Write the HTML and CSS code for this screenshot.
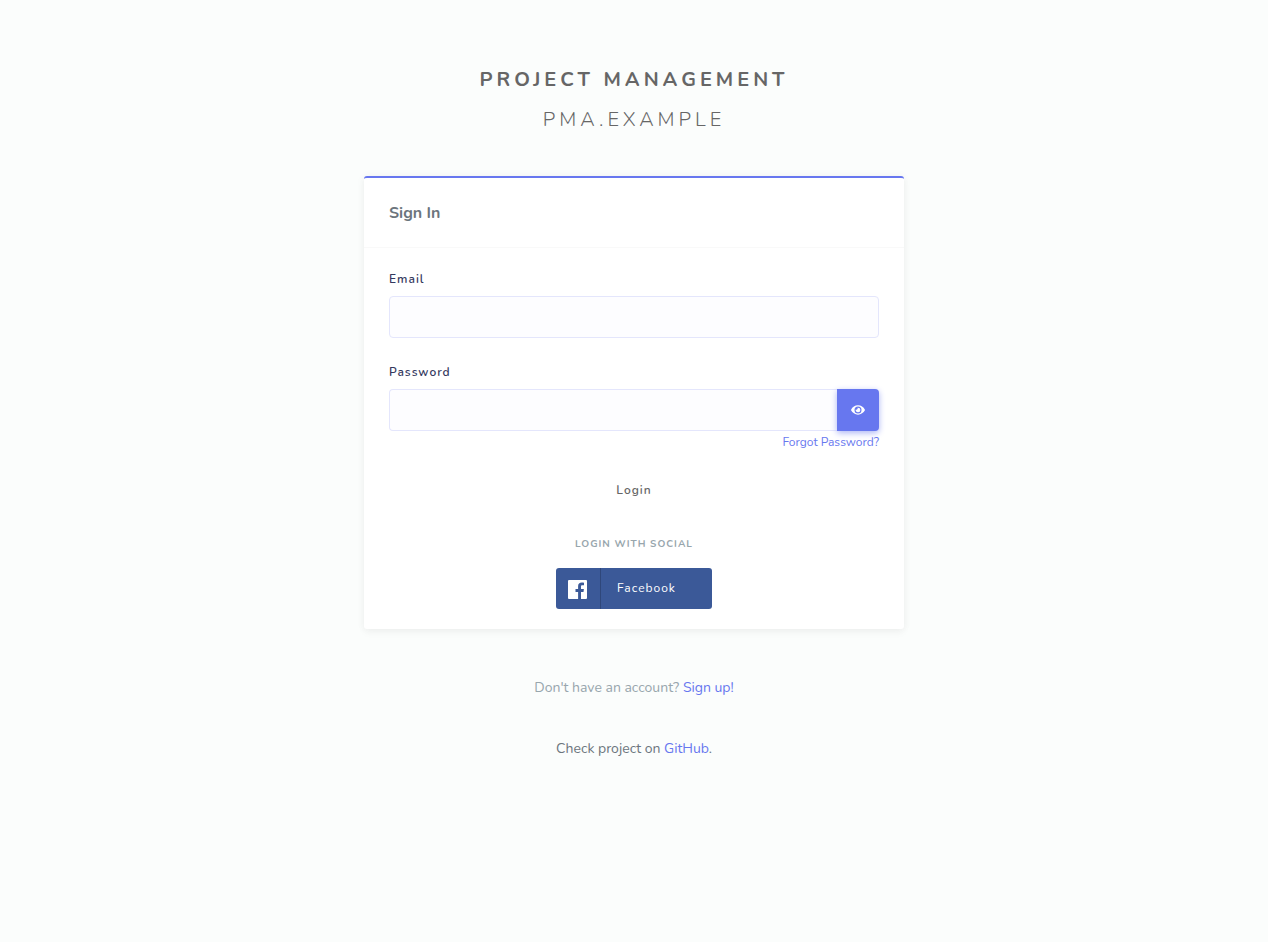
FILE: index.html
```html
<!DOCTYPE html>
<html lang="en">
<head>
<meta charset="utf-8">
<meta name="viewport" content="width=device-width, initial-scale=1">
<title>Sign In</title>
<link rel="stylesheet" href="styles.css">
</head>
<body>
<main class="page">
  <header class="brand">
    <h1 class="brand-name">PROJECT MANAGEMENT</h1>
    <p class="brand-host">PMA.EXAMPLE</p>
  </header>
  <section class="card">
    <div class="card-header"><h2 class="card-title">Sign In</h2></div>
    <form class="card-body">
      <div class="field">
        <label class="label" for="email">Email</label>
        <input class="input" id="email" type="email" name="email">
      </div>
      <div class="field">
        <label class="label" for="password">Password</label>
        <div class="input-group">
          <input class="input" id="password" type="password" name="password">
          <button class="reveal" type="button" aria-label="Show password">
            <svg class="eye" viewBox="0 0 576 512" aria-hidden="true"><path fill="currentColor" d="M572.52 241.4C518.29 135.59 410.93 64 288 64S57.68 135.64 3.48 241.41a32.35 32.35 0 0 0 0 29.19C57.71 376.41 165.07 448 288 448s230.32-71.64 284.52-177.41a32.35 32.35 0 0 0 0-29.19zM288 400a144 144 0 1 1 144-144 143.93 143.93 0 0 1-144 144zm0-240a95.31 95.31 0 0 0-25.31 3.79 47.85 47.85 0 0 1-66.9 66.9A95.78 95.78 0 1 0 288 160z"/></svg>
          </button>
        </div>
        <a class="forgot" href="#">Forgot Password?</a>
      </div>
      <button class="login" type="submit">Login</button>
      <p class="social-title">LOGIN WITH SOCIAL</p>
      <button class="facebook" type="button">
        <span class="facebook-icon"><svg class="facebook-logo" viewBox="0 0 19 19" aria-hidden="true"><path fill="currentColor" d="M1 0h17a1 1 0 0 1 1 1v17a1 1 0 0 1-1 1h-5v-7h2.500l.4-3H13V6.500c0-.8.300-1.300 1.400-1.300H16V2.700c-.6-.1-1.300-.1-2.200-.1-2.300 0-3.700 1.300-3.700 3.700V9H7.500v3h2.600v7H1a1 1 0 0 1-1-1V1a1 1 0 0 1 1-1z"/></svg></span>
        <span class="facebook-text">Facebook</span>
      </button>
    </form>
  </section>
  <p class="note note-muted">Don't have an account? <a href="#">Sign up!</a></p>
  <p class="note">Check project on <a href="#">GitHub</a>.</p>
</main>
</body>
</html>
```
FILE: styles.css
```css
* { box-sizing: border-box; }
body {
  margin: 0;
  background: #fbfdfc;
  color: #6c757d;
  font: 14px/24px Nunito, Lato, sans-serif;
}
h1, h2, p { margin: 0; }
a { color: #6777ef; text-decoration: none; }
button, input { font: inherit; }
button { cursor: pointer; }
.page {
  display: flex;
  flex-direction: column;
  align-items: center;
  padding: 60px 16px 40px;
}
.brand {
  margin-bottom: 36px;
  color: #666;
  font-size: 20px;
  line-height: 40px;
  letter-spacing: 4px;
  text-align: center;
}
.brand-name { font-size: inherit; font-weight: 700; }
.brand-host { font-weight: 300; }
.card {
  width: 100%;
  max-width: 540px;
  background: #fff;
  border-top: 2px solid #6777ef;
  border-radius: 3px;
  box-shadow: 0 4px 8px rgba(0, 0, 0, .03), 0 0 8px rgba(0, 0, 0, .05);
}
.card-header {
  padding: 21px 25px 20px;
  border-bottom: 1px solid #f9f9f9;
}
.card-title { font-size: 16px; line-height: 28px; font-weight: 700; }
.card-body {
  display: flex;
  flex-direction: column;
  align-items: center;
  padding: 20px 25px;
}
.field {
  display: flex;
  flex-direction: column;
  width: 100%;
  margin-bottom: 23px;
}
.label {
  margin-bottom: 6px;
  color: #34395e;
  font-size: 12px;
  line-height: 22px;
  font-weight: 600;
  letter-spacing: 1px;
}
.input {
  flex: 1;
  min-width: 0;
  min-height: 42px;
  padding: 8px 15px;
  background: #fdfdff;
  border: 1px solid #e4e6fc;
  border-radius: 4px;
}
.input-group { display: flex; }
.input-group .input { border-right: 0; border-radius: 4px 0 0 4px; }
.reveal {
  display: grid;
  place-items: center;
  width: 42px;
  padding: 0;
  border: 0;
  border-radius: 0 4px 4px 0;
  background: #6777ef;
  color: #fff;
  box-shadow: 0 2px 6px #acb5f6;
}
.eye { width: 14px; height: 14px; }
.forgot {
  align-self: flex-end;
  font-size: 12px;
  line-height: 22px;
}
.login {
  padding: 0 16px;
  border: 0;
  background: none;
  color: #666;
  font-size: 12px;
  line-height: 28px;
  font-weight: 600;
  letter-spacing: 1px;
}
.social-title {
  margin: 28px 0 12px;
  color: #98a6ad;
  font-size: 10px;
  font-weight: 700;
  letter-spacing: 1px;
}
.facebook {
  display: flex;
  width: 156px;
  height: 41px;
  padding: 0;
  border: 0;
  border-radius: 3px;
  background: #3b5998;
  color: #fff;
  font-size: 12px;
  line-height: 40px;
  letter-spacing: 1px;
}
.facebook-icon {
  display: grid;
  place-items: center;
  width: 45px;
  height: 41px;
  padding: 2px 2px 0 0;
  border-right: 1px solid #2f477a;
}
.facebook-logo { width: 19px; height: 19px; }
.facebook-text { padding-left: 16px; }
.note { margin-top: 37px; }
.note-muted { margin-top: 47px; color: #98a6ad; }
```
